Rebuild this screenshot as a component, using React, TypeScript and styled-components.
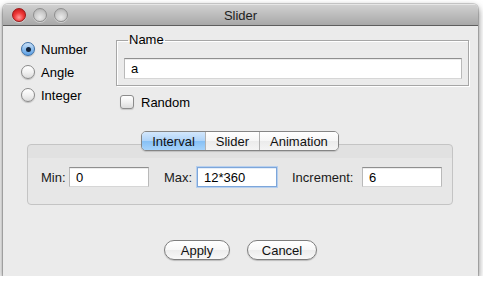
import React from "react";
import styled, { createGlobalStyle } from "styled-components";

const GlobalStyle = createGlobalStyle`
  html, body {
    margin: 0;
    padding: 0;
    background: #ffffff;
    overflow: hidden;
  }
  body {
    font-family: "Liberation Sans", Arial, sans-serif;
    font-size: 13px;
    color: #000;
  }
`;

const Window = styled.div`
  width: 475px;
  height: 272px;
  margin: 4px 0 0 3px;
  background: #ebebeb;
  border-radius: 5px 5px 0 0;
  box-shadow: 0 3px 7px rgba(0, 0, 0, 0.6), 0 0 0 1px rgba(0, 0, 0, 0.15);
  overflow: hidden;
  display: flex;
  flex-direction: column;
`;

const TitleBar = styled.div`
  height: 21px;
  flex: none;
  display: grid;
  grid-template-columns: 1fr auto 1fr;
  align-items: center;
  padding: 0 9px;
  background: linear-gradient(#d2d2d2 0%, #bdbdbd 50%, #a8a8a8 100%);
  border-bottom: 1px solid #5e5e5e;
  box-shadow: inset 0 1px 0 #e6e6e6;
`;

const Lights = styled.div`
  display: flex;
  gap: 7px;
`;

const Light = styled.div<{ $color: "red" | "grey" }>`
  width: 14px;
  height: 14px;
  border-radius: 50%;
  box-sizing: border-box;
  border: 1px solid ${(p) => (p.$color === "red" ? "#9b1a1a" : "#8f8f8f")};
  background: ${(p) =>
    p.$color === "red"
      ? "radial-gradient(circle at 50% 70%, #ff9a9a 0%, #f03a3a 45%, #b80f0f 100%)"
      : "radial-gradient(circle at 50% 70%, #eaeaea 0%, #cdcdcd 50%, #a9a9a9 100%)"};
  box-shadow: 0 1px 0 rgba(255, 255, 255, 0.4);
`;

const Title = styled.div`
  font-size: 13px;
  color: #1e1e1e;
  padding-top: 2px;
`;

const Body = styled.div`
  flex: 1;
  display: flex;
  flex-direction: column;
`;

const TopRow = styled.div`
  display: flex;
  align-items: flex-start;
  padding: 7px 9px 0 18px;
`;

const RadioCol = styled.div`
  width: 95px;
  margin-top: 7px;
  display: flex;
  flex-direction: column;
  gap: 5px;
`;

const OptionRow = styled.label`
  display: flex;
  align-items: center;
  gap: 6px;
  height: 18px;
`;

const Radio = styled.span<{ $checked?: boolean }>`
  width: 14px;
  height: 14px;
  box-sizing: border-box;
  border-radius: 50%;
  display: flex;
  align-items: center;
  justify-content: center;
  border: 1px solid ${(p) => (p.$checked ? "#3a6ea5" : "#8a8a8a")};
  background: ${(p) =>
    p.$checked
      ? "linear-gradient(#c9e0f7 0%, #8fbfee 50%, #5fa2e6 100%)"
      : "linear-gradient(#ffffff 0%, #f2f2f2 50%, #dcdcdc 100%)"};
  box-shadow: 0 1px 1px rgba(0, 0, 0, 0.2);
  &::after {
    content: "";
    display: ${(p) => (p.$checked ? "block" : "none")};
    width: 5px;
    height: 5px;
    border-radius: 50%;
    background: #13243a;
  }
`;

const NameCol = styled.div`
  flex: 1;
  display: flex;
  flex-direction: column;
`;

const Group = styled.fieldset`
  margin: 0;
  padding: 11px 6px 6px 7px;
  border: 1px solid #a6a6a6;
  box-shadow: 1px 1px 0 #ffffff, inset 1px 1px 0 #ffffff;
`;

const Legend = styled.legend`
  padding: 0 1px;
  margin-left: 4px;
  line-height: 14px;
  font-size: 13px;
`;

const TextField = styled.input<{ $focused?: boolean; $width?: number }>`
  box-sizing: border-box;
  width: ${(p) => (p.$width ? `${p.$width}px` : "100%")};
  height: ${(p) => (p.$width ? 20 : 21)}px;
  margin: 0;
  padding: 0 6px;
  font-family: "Liberation Sans", Arial, sans-serif;
  font-size: 13px;
  color: #000;
  background: #fff;
  outline: none;
  border: 1px solid #b9b9b9;
  border-top-color: #8f8f8f;
  border-bottom-color: #d6d6d6;
  box-shadow: inset 0 1px 0 #ececec;
  ${(p) =>
    p.$focused &&
    `
    border-color: #7da6da;
    box-shadow: 0 0 0 1px #b6cfee, inset 0 1px 0 #e6eef8;
  `}
`;

const CheckRow = styled(OptionRow)`
  margin: 7px 0 0 4px;
  gap: 7px;
`;

const CheckBox = styled.span`
  width: 14px;
  height: 14px;
  box-sizing: border-box;
  border-radius: 3px;
  border: 1px solid #8c8c8c;
  background: linear-gradient(#ffffff 0%, #f1f1f1 50%, #dddddd 100%);
  box-shadow: 0 1px 1px rgba(0, 0, 0, 0.15);
`;

const TabArea = styled.div`
  margin: 20px 25px 0 24px;
  display: flex;
  flex-direction: column;
  align-items: center;
`;

const Tabs = styled.div`
  display: flex;
  height: 20px;
  box-sizing: border-box;
  border: 1px solid #858585;
  border-radius: 5px;
  overflow: hidden;
  position: relative;
  z-index: 1;
  box-shadow: 0 1px 1px rgba(0, 0, 0, 0.15);
`;

const Tab = styled.div<{ $active?: boolean }>`
  padding: 0 10px;
  display: flex;
  align-items: center;
  font-size: 13px;
  color: #111;
  background: ${(p) =>
    p.$active
      ? "linear-gradient(#d3e7fc 0%, #aed3f8 50%, #86c0f5 51%, #a6d3fb 100%)"
      : "linear-gradient(#ffffff 0%, #f6f6f6 50%, #ebebeb 51%, #f4f4f4 100%)"};
  & + & {
    border-left: 1px solid #b2b2b2;
  }
`;

const Panel = styled.div`
  align-self: stretch;
  margin-top: -7px;
  border: 1px solid #c4c4c4;
  border-radius: 4px;
  background: linear-gradient(#e1e1e1 0px, #e1e1e1 13px, #e7e7e7 13px, #e7e7e7 100%);
  padding: 22px 0 17px 13px;
  display: flex;
  align-items: center;
`;

const FieldGroup = styled.div`
  display: flex;
  align-items: center;
  & + & {
    margin-left: 15px;
  }
`;

const FieldLabel = styled.span<{ $width: number }>`
  width: ${(p) => p.$width}px;
  font-size: 13px;
  color: #1a1a1a;
`;

const ButtonRow = styled.div`
  margin-top: 35px;
  display: flex;
  justify-content: center;
  gap: 17px;
`;

const PushButton = styled.button<{ $width: number }>`
  width: ${(p) => p.$width}px;
  height: 20px;
  padding: 0;
  font-family: "Liberation Sans", Arial, sans-serif;
  font-size: 13px;
  color: #111;
  border: 1px solid #7e7e7e;
  border-radius: 10px;
  background: linear-gradient(#ffffff 0%, #f7f7f7 50%, #ececec 51%, #f8f8f8 100%);
  box-shadow: 0 1px 1px rgba(0, 0, 0, 0.2);
`;

const fields = [
  { label: "Min:", width: 28, value: "0" },
  { label: "Max:", width: 33, value: "12*360", focused: true },
  { label: "Increment:", width: 70, value: "6" },
];

const App = () => {
  return (
    <>
      <GlobalStyle />
      <Window>
        <TitleBar>
          <Lights>
            <Light $color="red" />
            <Light $color="grey" />
            <Light $color="grey" />
          </Lights>
          <Title>Slider</Title>
          <div />
        </TitleBar>
        <Body>
          <TopRow>
            <RadioCol>
              <OptionRow>
                <Radio $checked />
                Number
              </OptionRow>
              <OptionRow>
                <Radio />
                Angle
              </OptionRow>
              <OptionRow>
                <Radio />
                Integer
              </OptionRow>
            </RadioCol>
            <NameCol>
              <Group>
                <Legend>Name</Legend>
                <TextField defaultValue="a" readOnly />
              </Group>
              <CheckRow>
                <CheckBox />
                Random
              </CheckRow>
            </NameCol>
          </TopRow>
          <TabArea>
            <Tabs>
              <Tab $active>Interval</Tab>
              <Tab>Slider</Tab>
              <Tab>Animation</Tab>
            </Tabs>
            <Panel>
              {fields.map((f) => (
                <FieldGroup key={f.label}>
                  <FieldLabel $width={f.width}>{f.label}</FieldLabel>
                  <TextField
                    $width={80}
                    $focused={f.focused}
                    defaultValue={f.value}
                    readOnly
                  />
                </FieldGroup>
              ))}
            </Panel>
          </TabArea>
          <ButtonRow>
            <PushButton $width={66}>Apply</PushButton>
            <PushButton $width={70}>Cancel</PushButton>
          </ButtonRow>
        </Body>
      </Window>
    </>
  );
};

export default App;
